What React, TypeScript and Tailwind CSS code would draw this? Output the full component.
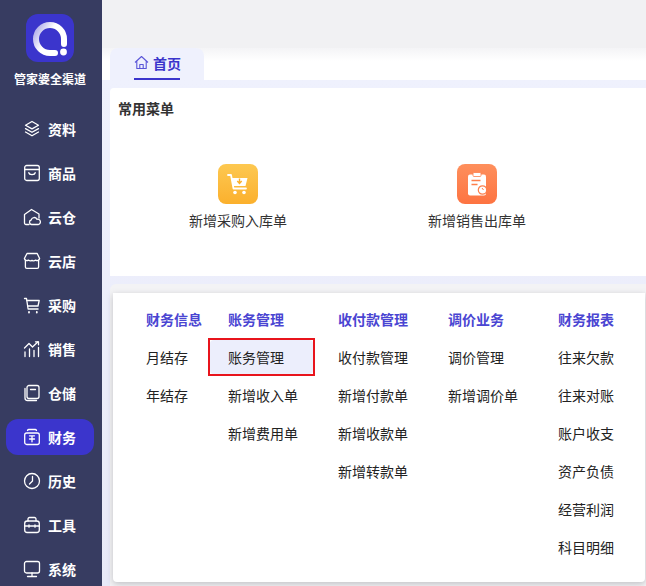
import React from 'react';

const font = { fontFamily: '"Noto Sans CJK SC", "Noto Sans", sans-serif' };

function NavIcon({ name }: { name: string }) {
  const common = {
    width: 20,
    height: 20,
    viewBox: '0 0 20 20',
    fill: 'none',
    stroke: '#fff',
    strokeWidth: 1.3,
    strokeLinecap: 'round' as const,
    strokeLinejoin: 'round' as const,
  };
  switch (name) {
    case '资料':
      return (
        <svg {...common}>
          <path d="M10 2.500l6.500 3.700L10 9.900 3.500 6.200 10 2.500z" />
          <path d="M3.500 9.600L10 13.300l6.500-3.700" />
          <path d="M3.500 13L10 16.800l6.500-3.800" />
        </svg>
      );
    case '商品':
      return (
        <svg {...common}>
          <rect x="2.700" y="2.500" width="14.600" height="15" rx="2" />
          <path d="M2.700 6.500h14.600" />
          <path d="M6.800 9.600c.4 2.600 6 2.600 6.400 0" />
        </svg>
      );
    case '云仓':
      return (
        <svg {...common}>
          <path d="M7 17.500H4a1.500 1.500 0 0 1-1.500-1.500V7.500L9.500 2.500l7.500 4.500v4" />
          <path d="M9.500 17.500a2.300 2.300 0 0 1-.3-4.500 3 3 0 0 1 5.700-.7 2.600 2.600 0 0 1 1.600 5.200H9.500z" />
        </svg>
      );
    case '云店':
      return (
        <svg {...common}>
          <path d="M5 2.500h10.200l2.400 5a2.600 2.600 0 0 1-4 1.600 3.400 3.400 0 0 1-3.600.3 3.400 3.400 0 0 1-3.600-.3 2.600 2.600 0 0 1-4-1.600L5 2.500z" />
          <path d="M3.400 9.600v6.400a1.400 1.400 0 0 0 1.400 1.400h10.400a1.400 1.400 0 0 0 1.400-1.400V9.600" />
        </svg>
      );
    case '采购':
      return (
        <svg {...common}>
          <path d="M2.500 3.500h2l1.600 10.500h10" />
          <path d="M4.800 5.500h12.400l-1.200 5.500H5.800" />
          <path d="M7 17v.6M14.800 17v.6" strokeWidth={1.8} />
        </svg>
      );
    case '销售':
      return (
        <svg {...common}>
          <path d="M2.500 9l4.500-4.500 3.500 3.500L16 2.800" />
          <path d="M13.500 2.800H16.500V5.800" />
          <path d="M3 13v4.500M7.500 10v7.500M12 11.500v6M16.500 8.500v9" />
        </svg>
      );
    case '仓储':
      return (
        <svg {...common}>
          <rect x="5" y="2.500" width="12" height="13" rx="2" />
          <path d="M3 5.500v9.500a2.500 2.500 0 0 0 2.500 2.500h9" />
          <path d="M8.500 6.500h5" />
        </svg>
      );
    case '财务':
      return (
        <svg {...common}>
          <rect x="2.700" y="6" width="14.600" height="11.500" rx="2" />
          <path d="M5.500 3.500a1.500 1.500 0 0 1 1.500-1h6a1.500 1.500 0 0 1 1.500 1" />
          <path d="M7.500 8.800h5M10 8.800v6M7.500 12h5" />
        </svg>
      );
    case '历史':
      return (
        <svg {...common}>
          <circle cx="10" cy="10" r="7.500" />
          <path d="M10.500 5.500V10l-3 3" />
        </svg>
      );
    case '工具':
      return (
        <svg {...common}>
          <rect x="2.700" y="6" width="14.600" height="11.500" rx="2.500" />
          <path d="M6 6V4a1.500 1.500 0 0 1 1.500-1.500h5A1.500 1.500 0 0 1 14 4v2" />
          <path d="M2.700 11h14.600M7 9.800v2.400M13 9.800v2.400" />
        </svg>
      );
    default:
      return (
        <svg {...common}>
          <rect x="2.500" y="2.500" width="15" height="11.500" rx="2" />
          <path d="M10 14v3.500M5.500 17.500h9" />
        </svg>
      );
  }
}

const navItems = ['资料', '商品', '云仓', '云店', '采购', '销售', '仓储', '财务', '历史', '工具', '系统'];

const columns = [
  { title: '财务信息', width: 'w-[82px]', items: ['月结存', '年结存'] },
  { title: '账务管理', width: 'w-[110px]', items: ['账务管理', '新增收入单', '新增费用单'] },
  { title: '收付款管理', width: 'w-[110px]', items: ['收付款管理', '新增付款单', '新增收款单', '新增转款单'] },
  { title: '调价业务', width: 'w-[110px]', items: ['调价管理', '新增调价单'] },
  { title: '财务报表', width: 'w-[70px]', items: ['往来欠款', '往来对账', '账户收支', '资产负债', '经营利润', '科目明细'] },
];

function Sidebar() {
  return (
    <aside className="w-[102px] h-[586px] shrink-0 bg-[#373c61] flex flex-col items-center pr-[2px] overflow-hidden">
      <div className="mt-[14px] w-12 h-12 rounded-xl bg-[#3b35cc] flex items-center justify-center">
        <svg width="48" height="48" viewBox="0 0 48 48">
          <defs>
            <linearGradient id="ring" x1="0" y1="0" x2="1" y2="0.6">
              <stop offset="0" stopColor="#a9a6e8" />
              <stop offset="0.5" stopColor="#ffffff" />
            </linearGradient>
          </defs>
          <path d="M38 30V25a14 14 0 1 0-14 14h5" fill="none" stroke="url(#ring)" strokeWidth="6" strokeLinecap="round" />
          <circle cx="37.500" cy="38" r="3.400" fill="#fff" />
        </svg>
      </div>
      <div className="mt-[7px] h-5 leading-5 text-[12px] font-bold text-white whitespace-nowrap">管家婆全渠道</div>
      <nav className="mt-[22px] w-[88px] flex flex-col gap-2 self-start ml-[6px]">
        {navItems.map((item) => (
          <div
            key={item}
            className={`h-9 w-[88px] rounded-xl flex items-center gap-[6px] pl-4 ${item === '财务' ? 'bg-[#3b35cc]' : ''}`}
          >
            <NavIcon name={item} />
            <span className="text-sm font-bold text-white leading-none whitespace-nowrap">{item}</span>
          </div>
        ))}
      </nav>
    </aside>
  );
}

function Shortcut({ label, from, to, children }: { label: string; from: string; to: string; children: React.ReactNode }) {
  return (
    <div className="w-[120px] flex flex-col items-center">
      <div className={`w-10 h-10 rounded-lg flex items-center justify-center bg-gradient-to-b ${from} ${to}`}>{children}</div>
      <div className="mt-[6px] h-5 leading-5 text-sm text-[#333] whitespace-nowrap">{label}</div>
    </div>
  );
}

export default function App() {
  return (
    <div className="flex w-[646px] h-[586px] overflow-hidden bg-white" style={font}>
      <Sidebar />
      <main className="flex-1 min-w-0 flex flex-col">
        <div className="h-[48px] bg-[#f1f1f3] shrink-0" />
        <div className="h-[32px] shrink-0 bg-gradient-to-b from-[#f4f4f6] to-white to-40% pl-2">
          <div className="w-[94px] h-[32px] rounded-t-lg bg-[#eff1fd] flex justify-center">
            <div className="h-[32px] w-[46px] border-b-2 border-[#3b35cc] flex items-center gap-[4px] pb-[1px]">
              <svg width="15" height="15" viewBox="0 0 15 15" fill="none" stroke="#5a55d8" strokeWidth="1.100" strokeLinejoin="round" className="shrink-0">
                <path d="M1 7.500L7.500 1.500 14 7.500M2.800 6.200V13.500h9.400V6.200" />
                <path d="M5.800 13.500V9.500h3.400v4" />
              </svg>
              <span className="text-sm font-bold leading-none text-[#3b35cc] whitespace-nowrap">首页</span>
            </div>
          </div>
        </div>
        <div className="flex-1 bg-gradient-to-b from-[#eff1fd] to-[#e8e9f8] pt-2 pl-2 flex flex-col min-h-0">
          <section className="h-[188px] shrink-0 bg-white rounded-tl-sm pl-[8px]">
            <h2 className="pt-[10px] h-8 leading-5 text-sm font-bold text-[#333]">常用菜单</h2>
            <div className="mt-[44px] flex pl-[60px] gap-[119px]">
              <Shortcut label="新增采购入库单" from="from-[#fdc850]" to="to-[#fbb02c]">
                <svg width="26" height="26" viewBox="0 0 26 26" fill="none">
                  <path d="M3 4h3l2.500 13.500h12.500" stroke="#fff" strokeWidth="1.800" strokeLinecap="round" strokeLinejoin="round" />
                  <path d="M6.500 7h16l-2 8H8z" fill="#fff" />
                  <path d="M14.500 7.500v4.500M12.300 10l2.200 2.500 2.200-2.500" stroke="#fbb02c" strokeWidth="1.400" />
                  <circle cx="10" cy="21.500" r="1.800" fill="#fff" />
                  <circle cx="19" cy="21.500" r="1.800" fill="#fff" />
                </svg>
              </Shortcut>
              <Shortcut label="新增销售出库单" from="from-[#fe8f5c]" to="to-[#fd7341]">
                <svg width="26" height="26" viewBox="0 0 26 26" fill="none">
                  <rect x="4" y="3.500" width="18" height="21" rx="2" fill="#fff" />
                  <rect x="9" y="1.500" width="8" height="4" rx="1" fill="#fff" stroke="#fd7f4b" strokeWidth="0.800" />
                  <path d="M7.500 9.500h9M7.500 13.500h6" stroke="#fd7f4b" strokeWidth="1.300" />
                  <circle cx="18.500" cy="19" r="4.200" fill="#fff" stroke="#fd7f4b" strokeWidth="1.200" />
                  <path d="M18 17l1.500 2" stroke="#fd7f4b" strokeWidth="1" />
                </svg>
              </Shortcut>
            </div>
          </section>
          <section className="mt-2 flex-1 min-h-0 bg-[#f3f3f5] rounded-tl-md pl-[3px] pt-[9px]">
            <div className="h-[289px] w-[532px] bg-white rounded-b-sm shadow-[0_2px_6px_rgba(100,100,110,0.35)] flex pl-[33px] pt-[16px]">
              {columns.map((col) => (
                <div key={col.title} className={`${col.width} shrink-0`}>
                  <div className="h-5 leading-5 text-sm font-bold text-[#4a45d2] whitespace-nowrap">{col.title}</div>
                  <ul className="mt-[9px]">
                    {col.items.map((item, i) => (
                      <li key={item} className="h-[38px] flex items-center text-sm text-[#222] whitespace-nowrap">
                        {col.title === '账务管理' && i === 0 ? (
                          <span className="-ml-[20px] h-[38px] w-[107px] border-2 border-[#e8141c] flex items-center">
                            <span className="h-[34px] w-full rounded-sm bg-[#eceefc] pl-[18px] flex items-center">{item}</span>
                          </span>
                        ) : (
                          item
                        )}
                      </li>
                    ))}
                  </ul>
                </div>
              ))}
            </div>
          </section>
        </div>
      </main>
    </div>
  );
}
